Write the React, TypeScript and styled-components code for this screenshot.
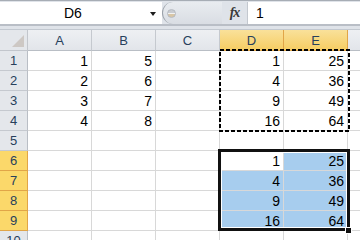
import React from "react";
import styled, { createGlobalStyle } from "styled-components";

const GlobalStyle = createGlobalStyle`
  html, body {
    margin: 0;
    padding: 0;
    width: 360px;
    height: 240px;
    overflow: hidden;
    background: #ffffff;
  }
  * {
    box-sizing: border-box;
  }
`;

const Window = styled.div`
  width: 360px;
  height: 240px;
  display: flex;
  flex-direction: column;
  font-family: "Liberation Sans", Arial, sans-serif;
  overflow: hidden;
`;

const FormulaBar = styled.div`
  height: 30px;
  flex: none;
  display: flex;
  align-items: flex-start;
  background: #dfe3e9;
  border-top: 1px solid #a7adb5;
  border-bottom: 1px solid #c2c8d0;
  padding-top: 1px;
  position: relative;

  &::after {
    content: "";
    position: absolute;
    left: 0;
    right: 0;
    top: 23px;
    height: 2px;
    background: #b9bec6;
  }
`;

const NameBox = styled.div`
  width: 162px;
  height: 22px;
  background: #fff;
  display: flex;
  align-items: center;
  font-size: 14px;
  color: #000;
  padding-left: 64px;
  position: relative;
`;

const DropArrow = styled.span`
  position: absolute;
  left: 150px;
  top: 10px;
  width: 0;
  height: 0;
  border-left: 3.5px solid transparent;
  border-right: 3.5px solid transparent;
  border-top: 4px solid #1c1c1c;
`;

const Pill = styled.div`
  width: 60px;
  height: 22px;
  display: flex;
  align-items: center;
  padding-left: 3px;
  border-left: 1px solid #9aa0a8;
  border-radius: 11px 0 0 11px;
  background: linear-gradient(#e9ecf0, #d9dde3);
`;

const Grip = styled.span`
  width: 9px;
  height: 9px;
  border-radius: 50%;
  background: linear-gradient(#c9ccd1 0 45%, #f2f2f2 45% 55%, #d8c6a6 55% 100%);
  border: 1px solid #b5bac1;
  margin-left: 1px;
`;

const Fx = styled.div`
  width: 25px;
  height: 22px;
  display: flex;
  align-items: center;
  justify-content: center;
  font-family: "Liberation Serif", "Times New Roman", serif;
  font-style: italic;
  font-weight: bold;
  font-size: 14px;
  color: #3a3a3a;
  letter-spacing: -1px;
`;

const FormulaInput = styled.div`
  flex: 1;
  height: 22px;
  background: #fff;
  border-left: 1px solid #c3c8cf;
  display: flex;
  align-items: center;
  padding-left: 8px;
  font-size: 14px;
  color: #000;
`;

const Sheet = styled.div`
  position: relative;
  flex: 1;
  display: grid;
  grid-template-columns: 28px repeat(6, 64px);
  grid-template-rows: 21px;
  grid-auto-rows: 20px;
  background: #fff;
  overflow: hidden;
`;

const Corner = styled.div`
  position: relative;
  background: #e4e7eb;
  border-right: 1px solid #c2c6cc;
  border-bottom: 1px solid #c2c6cc;

  &::after {
    content: "";
    position: absolute;
    right: 3px;
    bottom: 3px;
    width: 0;
    height: 0;
    border-left: 12px solid transparent;
    border-bottom: 12px solid #cdc8c4;
  }
`;

const ColHead = styled.div<{ $active?: boolean }>`
  display: flex;
  align-items: center;
  justify-content: center;
  font-size: 13px;
  color: #27405c;
  background: ${(p) =>
    p.$active
      ? "linear-gradient(#f9e19a, #f6cd63)"
      : "linear-gradient(#eef0f3, #e2e5ea)"};
  border-right: 1px solid ${(p) => (p.$active ? "#e1a548" : "#c5c9cf")};
  border-bottom: 1px solid ${(p) => (p.$active ? "#e1a548" : "#b9bec5")};
`;

const RowHead = styled.div<{ $active?: boolean }>`
  display: flex;
  align-items: center;
  justify-content: center;
  font-size: 13px;
  color: #27405c;
  background: ${(p) => (p.$active ? "#fbd86a" : "#e4e7eb")};
  border-right: 1px solid ${(p) => (p.$active ? "#e1a548" : "#b9bec5")};
  border-bottom: 1px solid ${(p) => (p.$active ? "#e1a548" : "#c5c9cf")};
`;

const Cell = styled.div<{ $selected?: boolean }>`
  display: flex;
  align-items: center;
  justify-content: flex-end;
  padding-right: 3px;
  padding-top: 1px;
  font-size: 14px;
  color: #000;
  background: ${(p) => (p.$selected ? "#a7cdee" : "#fff")};
  border-right: 1px solid #d8d8d8;
  border-bottom: 1px solid #d8d8d8;
`;

const Ants = styled.svg`
  position: absolute;
  left: 219px;
  top: 19px;
  pointer-events: none;
`;

const Selection = styled.div`
  position: absolute;
  left: 218px;
  top: 119px;
  width: 132px;
  height: 82px;
  border: 3px solid #111;
  box-shadow: inset 0 0 0 1px #fff;
  pointer-events: none;
`;

const FillHandle = styled.span`
  position: absolute;
  right: -5px;
  bottom: -6px;
  width: 7px;
  height: 7px;
  background: #111;
  border: 1px solid #fff;
`;

const columns = ["A", "B", "C", "D", "E", "F"];

type Row = (number | null)[];

const rows: Row[] = [
  [1, 5, null, 1, 25, null],
  [2, 6, null, 4, 36, null],
  [3, 7, null, 9, 49, null],
  [4, 8, null, 16, 64, null],
  [null, null, null, null, null, null],
  [null, null, null, 1, 25, null],
  [null, null, null, 4, 36, null],
  [null, null, null, 9, 49, null],
  [null, null, null, 16, 64, null],
  [null, null, null, null, null, null],
];

const isSelected = (r: number, c: number) =>
  r >= 5 && r <= 8 && (c === 3 || c === 4) && !(r === 5 && c === 3);

export default function App() {
  return (
    <Window>
      <GlobalStyle />
      <FormulaBar>
        <NameBox>
          D6
          <DropArrow />
        </NameBox>
        <Pill>
          <Grip />
        </Pill>
        <Fx>fx</Fx>
        <FormulaInput>1</FormulaInput>
      </FormulaBar>
      <Sheet>
        <Corner />
        {columns.map((c) => (
          <ColHead key={c} $active={c === "D" || c === "E"}>
            {c}
          </ColHead>
        ))}
        {rows.map((row, r) => (
          <React.Fragment key={r}>
            <RowHead $active={r >= 5 && r <= 8}>{r + 1}</RowHead>
            {row.map((v, c) => (
              <Cell key={c} $selected={isSelected(r, c)}>
                {v ?? ""}
              </Cell>
            ))}
          </React.Fragment>
        ))}
        <Ants width="132" height="84">
          <rect
            x="1"
            y="1"
            width="129"
            height="81"
            fill="none"
            stroke="#000"
            strokeWidth="2"
            strokeDasharray="4 2"
          />
        </Ants>
        <Selection>
          <FillHandle />
        </Selection>
      </Sheet>
    </Window>
  );
}
